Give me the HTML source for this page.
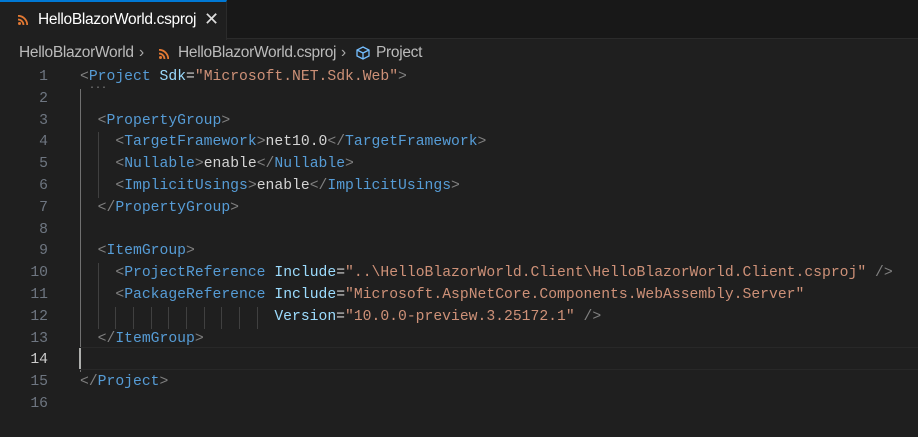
<!DOCTYPE html>
<html><head><meta charset="utf-8"><style>
*{margin:0;padding:0;box-sizing:border-box}
body{width:918px;height:437px;background:#1f1f1f;overflow:hidden;position:relative;font-family:"Liberation Sans",sans-serif}
.tabbar{position:absolute;left:0;top:0;width:918px;height:39px;background:#181818;border-bottom:1px solid #2b2b2b}
.tab{position:absolute;left:0;top:0;width:227px;height:40px;background:#1f1f1f;border-top:2px solid #0078d4;border-right:1px solid #2b2b2b;color:#fff;font-size:15.5px;letter-spacing:-0.3px}
.tab .t{position:absolute;left:38px;top:9px}
.tab .x{position:absolute;left:204px;top:7px;font-size:18px;color:#ddd}
.rss{position:absolute;width:10px;height:10px}
.bc{position:absolute;top:44px;color:#bbb;font-size:15.5px;letter-spacing:-0.3px;white-space:nowrap}
.code{font-family:"Liberation Mono",monospace;font-size:14.73px;white-space:pre;position:absolute;left:80px;line-height:21.8px}
.ln{position:absolute;right:870px;font-family:"Liberation Mono",monospace;font-size:14.73px;color:#6e7681;line-height:21.8px;text-align:right}
.b{color:#808080}.n{color:#569cd6}.a{color:#9cdcfe}.s{color:#ce9178}.t2{color:#d4d4d4}
.g{position:absolute;width:1px;background:#404040}
</style></head><body>
<div class="tabbar"></div>
<div class="tab">
<svg class="rss" style="left:18px;top:13px" viewBox="0 0 10 10"><circle cx="1.5" cy="8.5" r="1.5" fill="#e37933"/><path d="M0 4.5a5.5 5.5 0 0 1 5.5 5.5M0 0.8a9.2 9.2 0 0 1 9.2 9.2" stroke="#e37933" stroke-width="1.8" fill="none"/></svg>
<span class="t">HelloBlazorWorld.csproj</span><span class="x">✕</span></div>
<div class="bc" style="left:19px">HelloBlazorWorld</div>
<div class="bc" style="left:139px;color:#aaa">›</div>
<svg class="rss" style="left:159px;top:49px" viewBox="0 0 10 10"><circle cx="1.5" cy="8.5" r="1.5" fill="#e37933"/><path d="M0 4.5a5.5 5.5 0 0 1 5.5 5.5M0 0.8a9.2 9.2 0 0 1 9.2 9.2" stroke="#e37933" stroke-width="1.8" fill="none"/></svg>
<div class="bc" style="left:178px">HelloBlazorWorld.csproj</div>
<div class="bc" style="left:341px;color:#aaa">›</div>
<svg style="position:absolute;left:355px;top:45px;width:16px;height:16px" viewBox="0 0 16 16"><path d="M8 2L14 5v6L8 14 2 11V5z M2 5l6 3 6-3 M8 8v6" stroke="#75beff" stroke-width="1.3" fill="none"/></svg>
<div class="bc" style="left:376px">Project</div>

<div class="ln" style="top:67px">1<br>2<br>3<br>4<br>5<br>6<br>7<br>8<br>9<br>10<br>11<br>12<br>13<br><span style="color:#ccc">14</span><br>15<br>16</div>

<div class="g" style="left:80px;top:89px;height:283px;background:#707070"></div>
<div class="g" style="left:98px;top:132px;height:66px"></div>
<div class="g" style="left:98px;top:263px;height:66px"></div>
<div class="g" style="left:115px;top:307px;height:22px"></div>
<div class="g" style="left:133px;top:307px;height:22px"></div>
<div class="g" style="left:151px;top:307px;height:22px"></div>
<div class="g" style="left:168px;top:307px;height:22px"></div>
<div class="g" style="left:186px;top:307px;height:22px"></div>
<div class="g" style="left:204px;top:307px;height:22px"></div>
<div class="g" style="left:221px;top:307px;height:22px"></div>
<div class="g" style="left:239px;top:307px;height:22px"></div>
<div class="g" style="left:257px;top:307px;height:22px"></div>
<div style="position:absolute;left:80px;top:347px;width:838px;height:23px;border-top:1px solid #282828;border-bottom:1px solid #282828"></div>
<div style="position:absolute;left:79px;top:348px;width:2px;height:21px;background:#aeafad"></div>
<div style="position:absolute;left:89px;top:81px;color:#888;font-size:10px;font-family:'Liberation Mono',monospace">...</div>

<div class="code" style="top:67px"><span class="b">&lt;</span><span class="n">Project</span> <span class="a">Sdk</span><span class="t2">=</span><span class="s">"Microsoft.NET.Sdk.Web"</span><span class="b">&gt;</span>

  <span class="b">&lt;</span><span class="n">PropertyGroup</span><span class="b">&gt;</span>
    <span class="b">&lt;</span><span class="n">TargetFramework</span><span class="b">&gt;</span><span class="t2">net10.0</span><span class="b">&lt;/</span><span class="n">TargetFramework</span><span class="b">&gt;</span>
    <span class="b">&lt;</span><span class="n">Nullable</span><span class="b">&gt;</span><span class="t2">enable</span><span class="b">&lt;/</span><span class="n">Nullable</span><span class="b">&gt;</span>
    <span class="b">&lt;</span><span class="n">ImplicitUsings</span><span class="b">&gt;</span><span class="t2">enable</span><span class="b">&lt;/</span><span class="n">ImplicitUsings</span><span class="b">&gt;</span>
  <span class="b">&lt;/</span><span class="n">PropertyGroup</span><span class="b">&gt;</span>

  <span class="b">&lt;</span><span class="n">ItemGroup</span><span class="b">&gt;</span>
    <span class="b">&lt;</span><span class="n">ProjectReference</span> <span class="a">Include</span><span class="t2">=</span><span class="s">"..\HelloBlazorWorld.Client\HelloBlazorWorld.Client.csproj"</span> <span class="b">/&gt;</span>
    <span class="b">&lt;</span><span class="n">PackageReference</span> <span class="a">Include</span><span class="t2">=</span><span class="s">"Microsoft.AspNetCore.Components.WebAssembly.Server"</span>
                      <span class="a">Version</span><span class="t2">=</span><span class="s">"10.0.0-preview.3.25172.1"</span> <span class="b">/&gt;</span>
  <span class="b">&lt;/</span><span class="n">ItemGroup</span><span class="b">&gt;</span>

<span class="b">&lt;/</span><span class="n">Project</span><span class="b">&gt;</span>
</div>
</body></html>
